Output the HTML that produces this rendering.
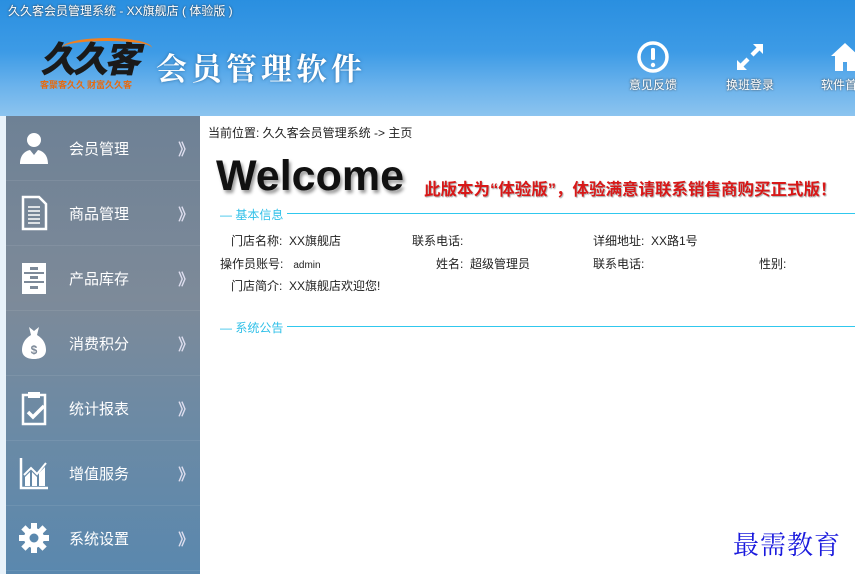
<!DOCTYPE html>
<html><head><meta charset="utf-8"><style>
*{margin:0;padding:0;box-sizing:border-box}
body{width:855px;height:574px;overflow:hidden;background:#fff;font-family:"Liberation Sans","Noto Sans CJK SC",sans-serif;position:relative}
#hdr{position:absolute;left:0;top:0;width:855px;height:116px;background:linear-gradient(180deg,#2a8fe0 0%,#3d9be6 45%,#6cb3ec 75%,#8cc4ef 100%)}
#hdr .t{position:absolute;left:8px;top:2px;font-size:12px;color:#fff;text-shadow:0 0 2px #333}
#logo{position:absolute;left:40px;top:34px;font-size:36px;font-style:italic;font-weight:900;color:#1a1a1a;letter-spacing:-4px;font-family:"Noto Sans CJK SC",sans-serif;line-height:46px}
#logo .s{position:absolute;left:0;top:45px;font-size:9px;color:#e66a10;letter-spacing:0;white-space:nowrap;font-style:normal;font-weight:bold;line-height:12px}
#logo .arc{position:absolute;left:22px;top:4px;width:90px;height:20px;border-top:3px solid #f08020;border-radius:50%}
#title{position:absolute;left:156px;top:44px;font-size:31px;font-weight:bold;color:#fff;letter-spacing:4px;font-family:"Noto Serif CJK SC",serif;text-shadow:0 0 3px #2a6aa0}
.tb{position:absolute;top:40px;width:70px;text-align:center;color:#fff;font-size:12px;text-shadow:0 0 2px #333}
.tb svg{display:block;margin:0 auto 2px}
#side{position:absolute;left:0;top:116px;width:200px;height:458px;background:linear-gradient(180deg,#6e8195 0%,#7d8a99 40%,#6d8aa4 65%,#5a88ae 100%);border-left:6px solid #e8f2fa}
.mi{position:absolute;left:0;width:194px;height:65px;border-bottom:1px solid rgba(255,255,255,.08)}
.mi .ic{position:absolute;left:12px;top:14px;width:32px;height:36px}
.mi .tx{position:absolute;left:63px;top:22px;font-size:15px;color:#fff}
.mi .ar{position:absolute;left:172px;top:20px;font-size:16px;color:#dde;font-weight:bold}
#main{position:absolute;left:200px;top:116px;width:655px;height:458px;background:#fff}
.crumb{position:absolute;left:8px;top:8px;font-size:12px;color:#222}
.wel{position:absolute;left:16px;top:36px;font-size:43px;font-weight:bold;color:#111;text-shadow:2px 3px 3px #999;letter-spacing:0}
.notice{position:absolute;left:224px;top:60px;font-size:16.5px;font-weight:bold;color:#d81818;white-space:nowrap;text-shadow:1px 1px 1px #aaa}
.sec{position:absolute;left:20px;height:14px;font-size:12px;color:#30c0e8;width:640px}
.sec span{background:#fff;position:relative;padding-right:4px}
.sec:before{content:"";position:absolute;left:0;right:0;top:7px;border-top:1px solid #30c8ee}
.f{position:absolute;font-size:12px;color:#222;white-space:nowrap}
#wm{position:absolute;left:733px;top:525px;font-size:26px;color:#1a1add;font-family:"Noto Serif CJK SC",serif;letter-spacing:1px}
</style></head><body>
<div id="hdr">
<div class="t">久久客会员管理系统 - XX旗舰店 ( 体验版 )</div>
<div id="logo"><div class="arc"></div>久久客<div class="s">客聚客久久 财富久久客</div></div>
<div id="title">会员管理软件</div>
<div class="tb" style="left:618px"><svg width="34" height="34" viewBox="0 0 34 34"><circle cx="17" cy="17" r="14" fill="none" stroke="#fff" stroke-width="3.5"/><rect x="15" y="8" width="4" height="12" rx="1.5" fill="#fff"/><circle cx="17" cy="25" r="2.2" fill="#fff"/></svg>意见反馈</div>
<div class="tb" style="left:715px"><svg width="34" height="34" viewBox="0 0 34 34"><path d="M20 4h10v10l-3.5-3.5-6 6-3-3 6-6z M14 30H4V20l3.5 3.5 6-6 3 3-6 6z" fill="#fff"/></svg>换班登录</div>
<div class="tb" style="left:810px"><svg width="34" height="34" viewBox="0 0 34 34"><path d="M17 3 3 16h4v15h8v-9h4v9h8V16h4z" fill="#fff"/></svg>软件首页</div>
</div>
<div id="side">
<div class="mi" style="top:0"><svg class="ic" viewBox="0 0 32 36"><circle cx="16" cy="10" r="7" fill="#fff"/><path d="M2 34c0-9 5-13 10-14l4 5 4-5c5 1 10 5 10 14z" fill="#fff"/></svg><div class="tx">会员管理</div><div class="ar">》</div></div>
<div class="mi" style="top:65px"><svg class="ic" viewBox="0 0 32 36"><path d="M5 2h16l7 7v25H5z" fill="none" stroke="#fff" stroke-width="2.5"/><path d="M10 12h12M10 16h12M10 20h12M10 24h12M10 28h12" stroke="#fff" stroke-width="1.6"/></svg><div class="tx">商品管理</div><div class="ar">》</div></div>
<div class="mi" style="top:130px"><svg class="ic" viewBox="0 0 32 36"><rect x="4" y="3" width="24" height="31" fill="#fff"/><path d="M6 13h20M6 22h20" stroke="#7d8a99" stroke-width="2"/><rect x="12" y="7" width="8" height="3" fill="#7d8a99"/><rect x="12" y="16" width="8" height="3" fill="#7d8a99"/><rect x="12" y="26" width="8" height="3" fill="#7d8a99"/></svg><div class="tx">产品库存</div><div class="ar">》</div></div>
<div class="mi" style="top:195px"><svg class="ic" viewBox="0 0 32 36"><path d="M11 2l5 4 5-4-2 8c7 4 9 10 9 15 0 6-5 9-12 9S4 31 4 25c0-5 2-11 9-15z" fill="#fff"/><text x="16" y="29" font-size="12" text-anchor="middle" fill="#7d8a99" font-weight="bold" font-family="Liberation Sans">$</text></svg><div class="tx">消费积分</div><div class="ar">》</div></div>
<div class="mi" style="top:260px"><svg class="ic" viewBox="0 0 32 36"><path d="M10 5H5v29h22V5h-5" fill="none" stroke="#fff" stroke-width="2.5"/><rect x="10" y="2" width="12" height="6" fill="#fff"/><path d="M10 22l5 5 11-11" fill="none" stroke="#fff" stroke-width="3.5"/></svg><div class="tx">统计报表</div><div class="ar">》</div></div>
<div class="mi" style="top:325px"><svg class="ic" viewBox="0 0 32 36"><path d="M3 3v30h27" fill="none" stroke="#fff" stroke-width="2.5"/><path d="M7 31V22l5-5v14zM14 31V17l5 5v9zM21 31V18l6-6v19z" fill="#fff"/><path d="M6 20l7-7 6 6 9-11" fill="none" stroke="#fff" stroke-width="2"/></svg><div class="tx">增值服务</div><div class="ar">》</div></div>
<div class="mi" style="top:390px"><svg class="ic" viewBox="0 0 32 36"><g transform="translate(16 18)" fill="#fff"><circle r="10"/><g id="t"><rect x="-3" y="-15" width="6" height="6"/></g><use href="#t" transform="rotate(45)"/><use href="#t" transform="rotate(90)"/><use href="#t" transform="rotate(135)"/><use href="#t" transform="rotate(180)"/><use href="#t" transform="rotate(225)"/><use href="#t" transform="rotate(270)"/><use href="#t" transform="rotate(315)"/><circle r="4.5" fill="#5a88ae"/></g></svg><div class="tx">系统设置</div><div class="ar">》</div></div>
</div>
<div id="main">
<div class="crumb">当前位置: 久久客会员管理系统 -&gt; 主页</div>
<div class="wel">Welcome</div>
<div class="notice">此版本为“体验版”，体验满意请联系销售商购买正式版！</div>
<div class="sec" style="top:90px"><span>— 基本信息</span></div>
<div class="f" style="left:31px;top:116px">门店名称:&nbsp; XX旗舰店</div>
<div class="f" style="left:212px;top:116px">联系电话:</div>
<div class="f" style="left:393px;top:116px">详细地址:&nbsp; XX路1号</div>
<div class="f" style="left:20px;top:139px">操作员账号:&nbsp;&nbsp; <span style="font-size:10px">admin</span></div>
<div class="f" style="left:236px;top:139px">姓名:&nbsp; 超级管理员</div>
<div class="f" style="left:393px;top:139px">联系电话:</div>
<div class="f" style="left:559px;top:139px">性别:</div>
<div class="f" style="left:31px;top:161px">门店简介:&nbsp; XX旗舰店欢迎您!</div>
<div class="sec" style="top:203px"><span>— 系统公告</span></div>
</div>
<div id="wm">最需教育</div>
</body></html>
